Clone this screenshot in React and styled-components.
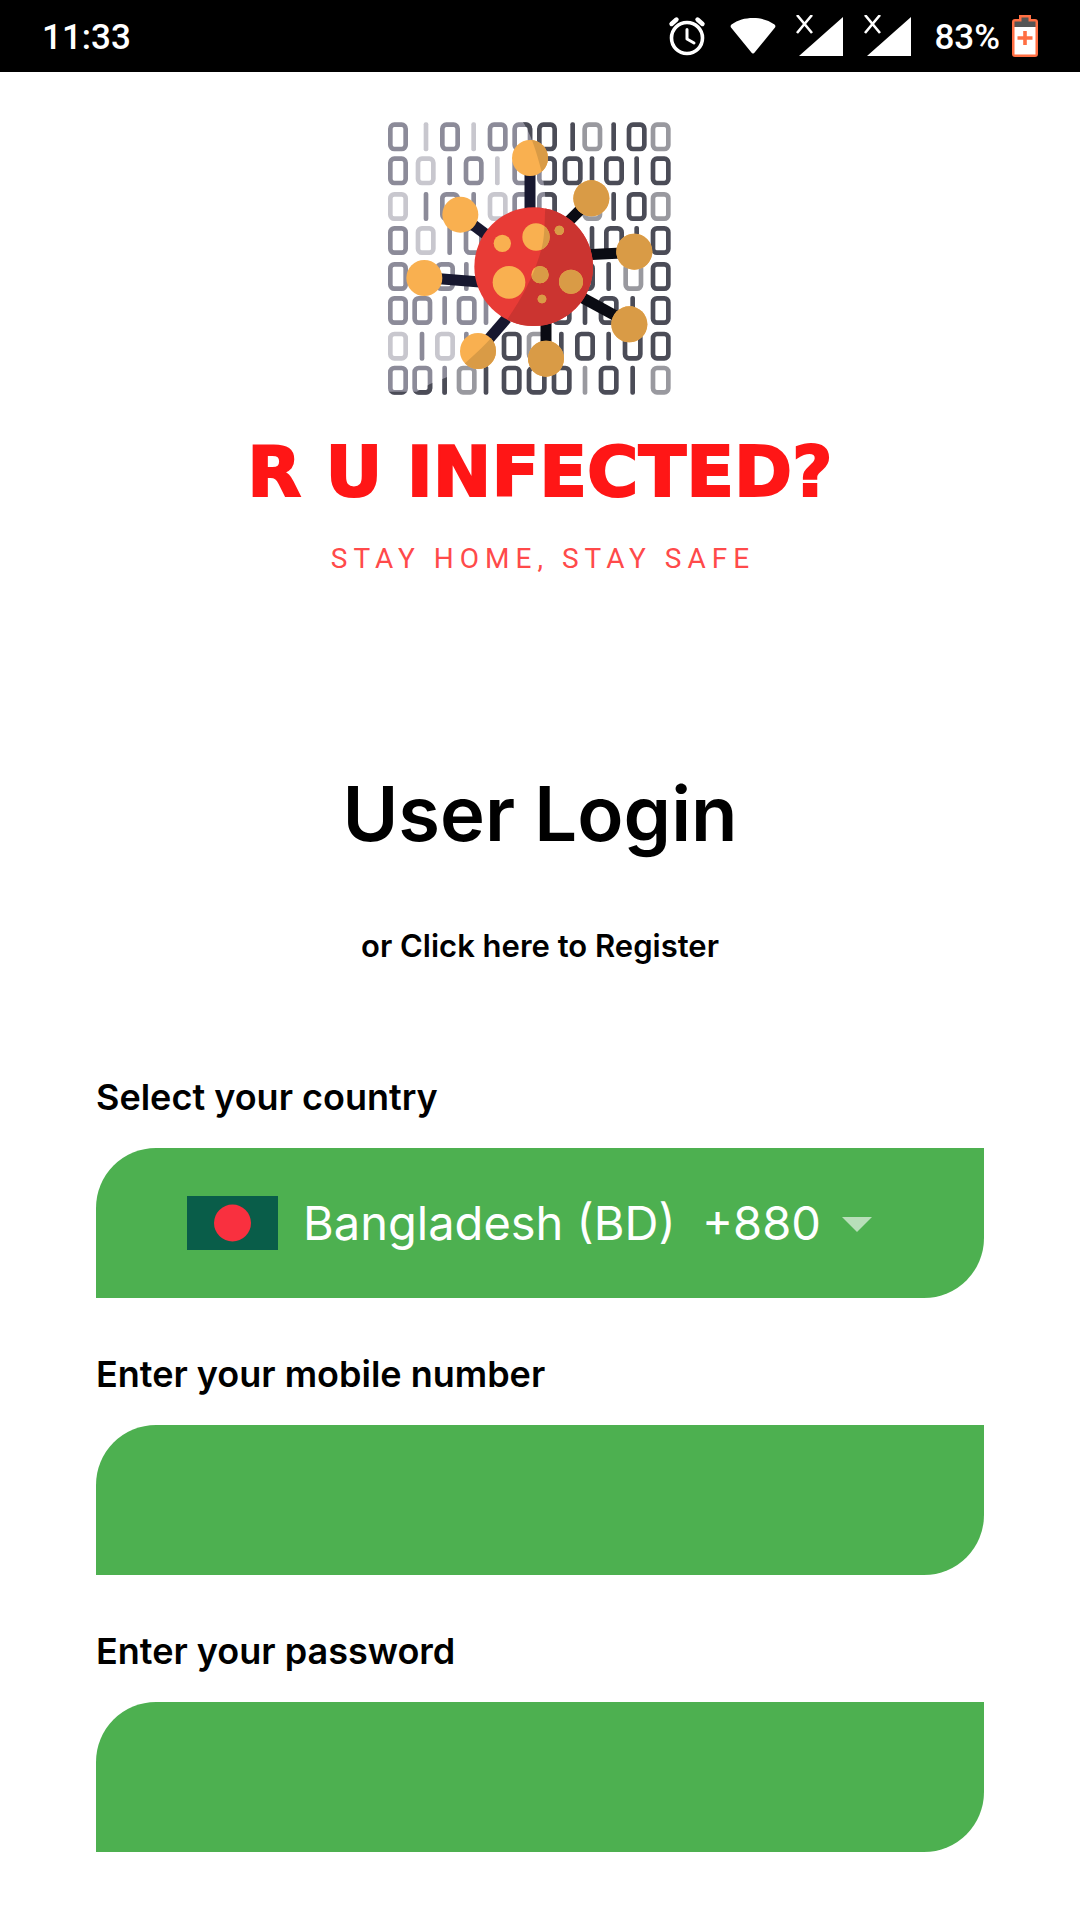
import React from "react";
import styled, { createGlobalStyle } from "styled-components";

const GlobalStyle = createGlobalStyle`
  *, *::before, *::after { box-sizing: border-box; }
  body {
    margin: 0;
    background: #fff;
    color: #000;
    font-family: Inter, "Open Sans", sans-serif;
  }
`;

const StatusBar = styled.header`
  display: flex;
  align-items: center;
  justify-content: space-between;
  height: 72px;
  padding: 0 42px;
  background: #000;
  color: #fff;
  font: 500 35px/40px Roboto, sans-serif;
`;

const StatusIcons = styled.div`
  display: flex;
  align-items: center;
  svg { display: block; }
`;

const Gap = styled.span`
  width: ${({ $w }) => $w}px;
`;

const Clock = styled.time`
  padding-top: 4px;
`;

const Level = styled.span`
  padding: 4px 12px 0 22px;
`;

const Screen = styled.main`
  display: flex;
  flex-direction: column;
  padding: 28px 96px 68px;
`;

const Brand = styled.section`
  display: flex;
  flex-direction: column;
  align-items: center;
  text-align: center;
`;

const BrandName = styled.p`
  margin: 32px 0 0;
  color: #ff1616;
  font: 700 70px/80px "DejaVu Sans", Inter, sans-serif;
  -webkit-text-stroke: 2px #ff1616;
  white-space: nowrap;
`;

const Tagline = styled.p`
  margin: 27px 0 0;
  padding-left: 6px;
  color: #ff4a4a;
  font: 400 28px/40px Roboto, sans-serif;
  letter-spacing: 6px;
`;

const Title = styled.h1`
  margin: 186px 0 0;
  font-weight: 600;
  font-size: 76px;
  line-height: 96px;
  text-align: center;
`;

const RegisterLink = styled.a`
  align-self: center;
  margin-top: 65px;
  color: inherit;
  font-weight: 600;
  font-size: 31px;
  line-height: 40px;
  text-decoration: none;
`;

const Form = styled.form`
  display: flex;
  flex-direction: column;
  gap: 52px;
  margin-top: 107px;
`;

const Field = styled.div`
  display: flex;
  flex-direction: column;
  gap: 27px;
`;

const Label = styled.label`
  font-weight: 600;
  font-size: 36px;
  line-height: 48px;
`;

const leaf = `
  height: 150px;
  border: 0;
  border-radius: 60px 0;
  background: #4db050;
  color: #fff;
`;

const TextBox = styled.input`
  ${leaf}
  width: 100%;
  padding: 0 60px;
  font: 400 47px Inter, sans-serif;
  outline: none;
`;

const Picker = styled.div`
  ${leaf}
  display: flex;
  align-items: center;
  justify-content: center;
  svg { display: block; flex: none; }
`;

const CountrySelect = styled.select`
  appearance: none;
  field-sizing: content;
  margin: 0 0 0 25px;
  padding: 0;
  border: 0;
  background: transparent;
  color: inherit;
  font: 400 47px/60px Inter, sans-serif;
  outline: none;
`;

const AlarmIcon = () => (
  <svg width="38" height="40" viewBox="0 0 38 40" fill="none" stroke="#fff" strokeLinecap="round" aria-hidden="true">
    <circle cx="19" cy="22" r="15.500" strokeWidth="3.600" />
    <path d="M19 13.500v9.500l7 4" strokeWidth="3" strokeLinejoin="round" />
    <path d="M3.500 8l5-4.500M34.500 8l-5-4.500" strokeWidth="4.400" />
  </svg>
);

const WifiIcon = () => (
  <svg width="46" height="36" viewBox="0 0 46 36" fill="#fff" aria-hidden="true">
    <path d="M1.500 6.500C8 2 15 0 23 0s15 2 21.500 6.500q1.500 1.200.5 3L25 34q-2 3-4 0L1 9.500q-1-1.800.5-3z" />
  </svg>
);

const SignalIcon = () => (
  <svg width="48" height="42" viewBox="0 0 48 42" aria-hidden="true">
    <path d="M47 2v39H3z" fill="#fff" />
    <path d="M1 0l15 18M16 0L1 18" stroke="#fff" strokeWidth="2.600" fill="none" />
  </svg>
);

const BatteryIcon = () => (
  <svg width="26" height="42" viewBox="0 0 26 42" aria-hidden="true">
    <path d="M7 0h12v4h4q3 0 3 3v32q0 3-3 3H3q-3 0-3-3V7q0-3 3-3h4z" fill="#ff6f43" />
    <path d="M2.500 6.500h7v-4h7v4h7V12h-21z" fill="#555" />
    <path d="M2.500 12h21v27.500h-21z" fill="#fff" />
    <path d="M13 16v14M5.500 23h15" stroke="#ff6f43" strokeWidth="3.600" />
  </svg>
);

/* Tones: l = pale, m = grey, d = dark, g = neutral grey, h = split by the shade line. */
const TONES = { l: "#c8c7ce", m: "#8c8b99", d: "#4b4c57", g: "#99999f" };

/* Each entry: digit, x, tone. Zeros are placed by left edge, ones by centre. */
const ROWS = [
  [67, "0 54 m,1 168 l,0 210 m,1 311 l,0 353 m,0 427 h,0 501 d,1 608 d,0 637 g,1 731 d,0 770 d,0 842 g"],
  [169, "0 54 m,0 137 l,1 239 m,0 281 m,1 382 l,0 427 m,0 501 h,0 578 d,1 666 d,0 702 d,1 800 d,0 842 d"],
  [276, "0 54 l,1 168 m,0 210 m,1 311 m,0 353 l,0 427 m,0 501 h,0 637 g,1 731 d,0 770 d,0 842 g"],
  [378, "0 54 m,0 137 l,1 239 m,0 281 m,1 666 d,0 702 d,1 800 d,0 842 d"],
  [486, "0 54 m,0 195 m,1 289 m,0 615 d,1 716 d,0 760 g,0 842 d"],
  [588, "0 54 m,0 127 m,1 224 m,0 260 m,1 348 m,0 545 d,1 645 d,0 686 d,1 788 d,0 842 d"],
  [695, "0 54 l,1 156 m,0 195 l,1 289 m,0 395 d,0 470 g,1 574 d,0 615 d,1 716 d,0 758 d,0 842 d"],
  [797, "0 54 h,0 127 h,1 224 h,0 260 g,1 348 d,0 395 d,0 470 d,0 545 d,1 645 g,0 686 d,1 788 d,0 842 g"],
].map(([y, text]) => ({
  y,
  digits: text.split(",").map((entry) => {
    const [digit, x, tone] = entry.split(" ");
    return { digit, x: Number(x), tone };
  }),
}));

const Digit = ({ digit, x, y, color, clip }) =>
  digit === "0" ? (
    <rect x={x + 7} y={y + 7} width="46" height="73" rx="12" fill="none" stroke={color} strokeWidth="14" clipPath={clip} />
  ) : (
    <rect x={x - 7} y={y} width="14" height="87" rx="6" fill={color} clipPath={clip} />
  );

const ARMS = [
  [480, 190, 480, 340, "#17172f"],
  [290, 360, 350, 405, "#17172f"],
  [190, 535, 330, 546, "#17172f"],
  [340, 736, 410, 655, "#17172f"],
  [528, 750, 528, 660, "#0a0b13"],
  [760, 660, 635, 592, "#0a0b13"],
  [770, 458, 650, 464, "#0a0b13"],
  [650, 310, 590, 370, "#0a0b13"],
];

const KNOBS = [
  [480, 174, 54], [271, 344, 54], [163, 534, 54], [324, 753, 54],
  [528, 776, 54], [778, 673, 54], [793, 455, 54], [664, 295, 54],
];

const SPOTS = [
  [397, 430, 26], [498, 411, 41], [568, 391, 14], [417, 547, 49],
  [510, 524, 26], [603, 545, 36], [516, 597, 13],
];

const Circles = ({ items, fill }) =>
  items.map(([cx, cy, r]) => <circle key={`${cx}-${cy}`} cx={cx} cy={cy} r={r} fill={fill} />);

const VirusLogo = () => (
  <svg width="340" height="300" viewBox="0 0 1020 900" role="img" aria-label="Virus over binary digits">
    <defs>
      <clipPath id="shade">
        <path d="M455 60C480 95 498 150 515 215C526 270 528 300 525 340C523 400 522 425 510 462C490 530 450 605 410 660C370 710 330 750 285 790L230 832L180 852L140 875L55 875V900H1020V60z" />
      </clipPath>
    </defs>
    {ROWS.map(({ y, digits }) =>
      digits.map(({ digit, x, tone }) => (
        <React.Fragment key={`${y}-${x}`}>
          <Digit digit={digit} x={x} y={y} color={TONES[tone] || TONES.m} />
          {tone === "h" && <Digit digit={digit} x={x} y={y} color={TONES.d} clip="url(#shade)" />}
        </React.Fragment>
      ))
    )}
    {ARMS.map(([x1, y1, x2, y2, color]) => (
      <line key={`${x1}-${y1}`} x1={x1} y1={y1} x2={x2} y2={y2} stroke={color} strokeWidth="33" />
    ))}
    <circle cx="491" cy="500" r="178" fill="#e83b36" />
    <circle cx="491" cy="500" r="178" fill="#cb3430" clipPath="url(#shade)" />
    <Circles items={KNOBS} fill="#f9b050" />
    <Circles items={SPOTS} fill="#f9b050" />
    <g clipPath="url(#shade)">
      <Circles items={KNOBS} fill="#d99b46" />
      <Circles items={SPOTS} fill="#d99b46" />
    </g>
  </svg>
);

const Flag = () => (
  <svg width="91" height="54" viewBox="0 0 91 54" aria-hidden="true">
    <rect width="91" height="54" fill="#095d49" />
    <circle cx="45.500" cy="27" r="18.500" fill="#f9303f" />
  </svg>
);

const Caret = () => (
  <svg width="72" height="72" viewBox="0 0 24 24" aria-hidden="true">
    <path d="M7 10l5 5 5-5z" fill="#b8dfb9" />
  </svg>
);

export default function App() {
  return (
    <>
      <GlobalStyle />
      <StatusBar>
        <Clock>11:33</Clock>
        <StatusIcons>
          <AlarmIcon />
          <Gap $w={24} />
          <WifiIcon />
          <Gap $w={20} />
          <SignalIcon />
          <Gap $w={20} />
          <SignalIcon />
          <Level>83%</Level>
          <BatteryIcon />
        </StatusIcons>
      </StatusBar>
      <Screen>
        <Brand>
          <VirusLogo />
          <BrandName>R U INFECTED?</BrandName>
          <Tagline>STAY HOME, STAY SAFE</Tagline>
        </Brand>
        <Title>User Login</Title>
        <RegisterLink href="#register">or Click here to Register</RegisterLink>
        <Form>
          <Field>
            <Label htmlFor="country">Select your country</Label>
            <Picker>
              <Flag />
              <CountrySelect id="country" defaultValue="BD">
                <option value="BD">{"Bangladesh (BD)\u00a0\u00a0+880"}</option>
              </CountrySelect>
              <Caret />
            </Picker>
          </Field>
          <Field>
            <Label htmlFor="mobile">Enter your mobile number</Label>
            <TextBox id="mobile" type="tel" />
          </Field>
          <Field>
            <Label htmlFor="password">Enter your password</Label>
            <TextBox id="password" type="password" />
          </Field>
        </Form>
      </Screen>
    </>
  );
}
